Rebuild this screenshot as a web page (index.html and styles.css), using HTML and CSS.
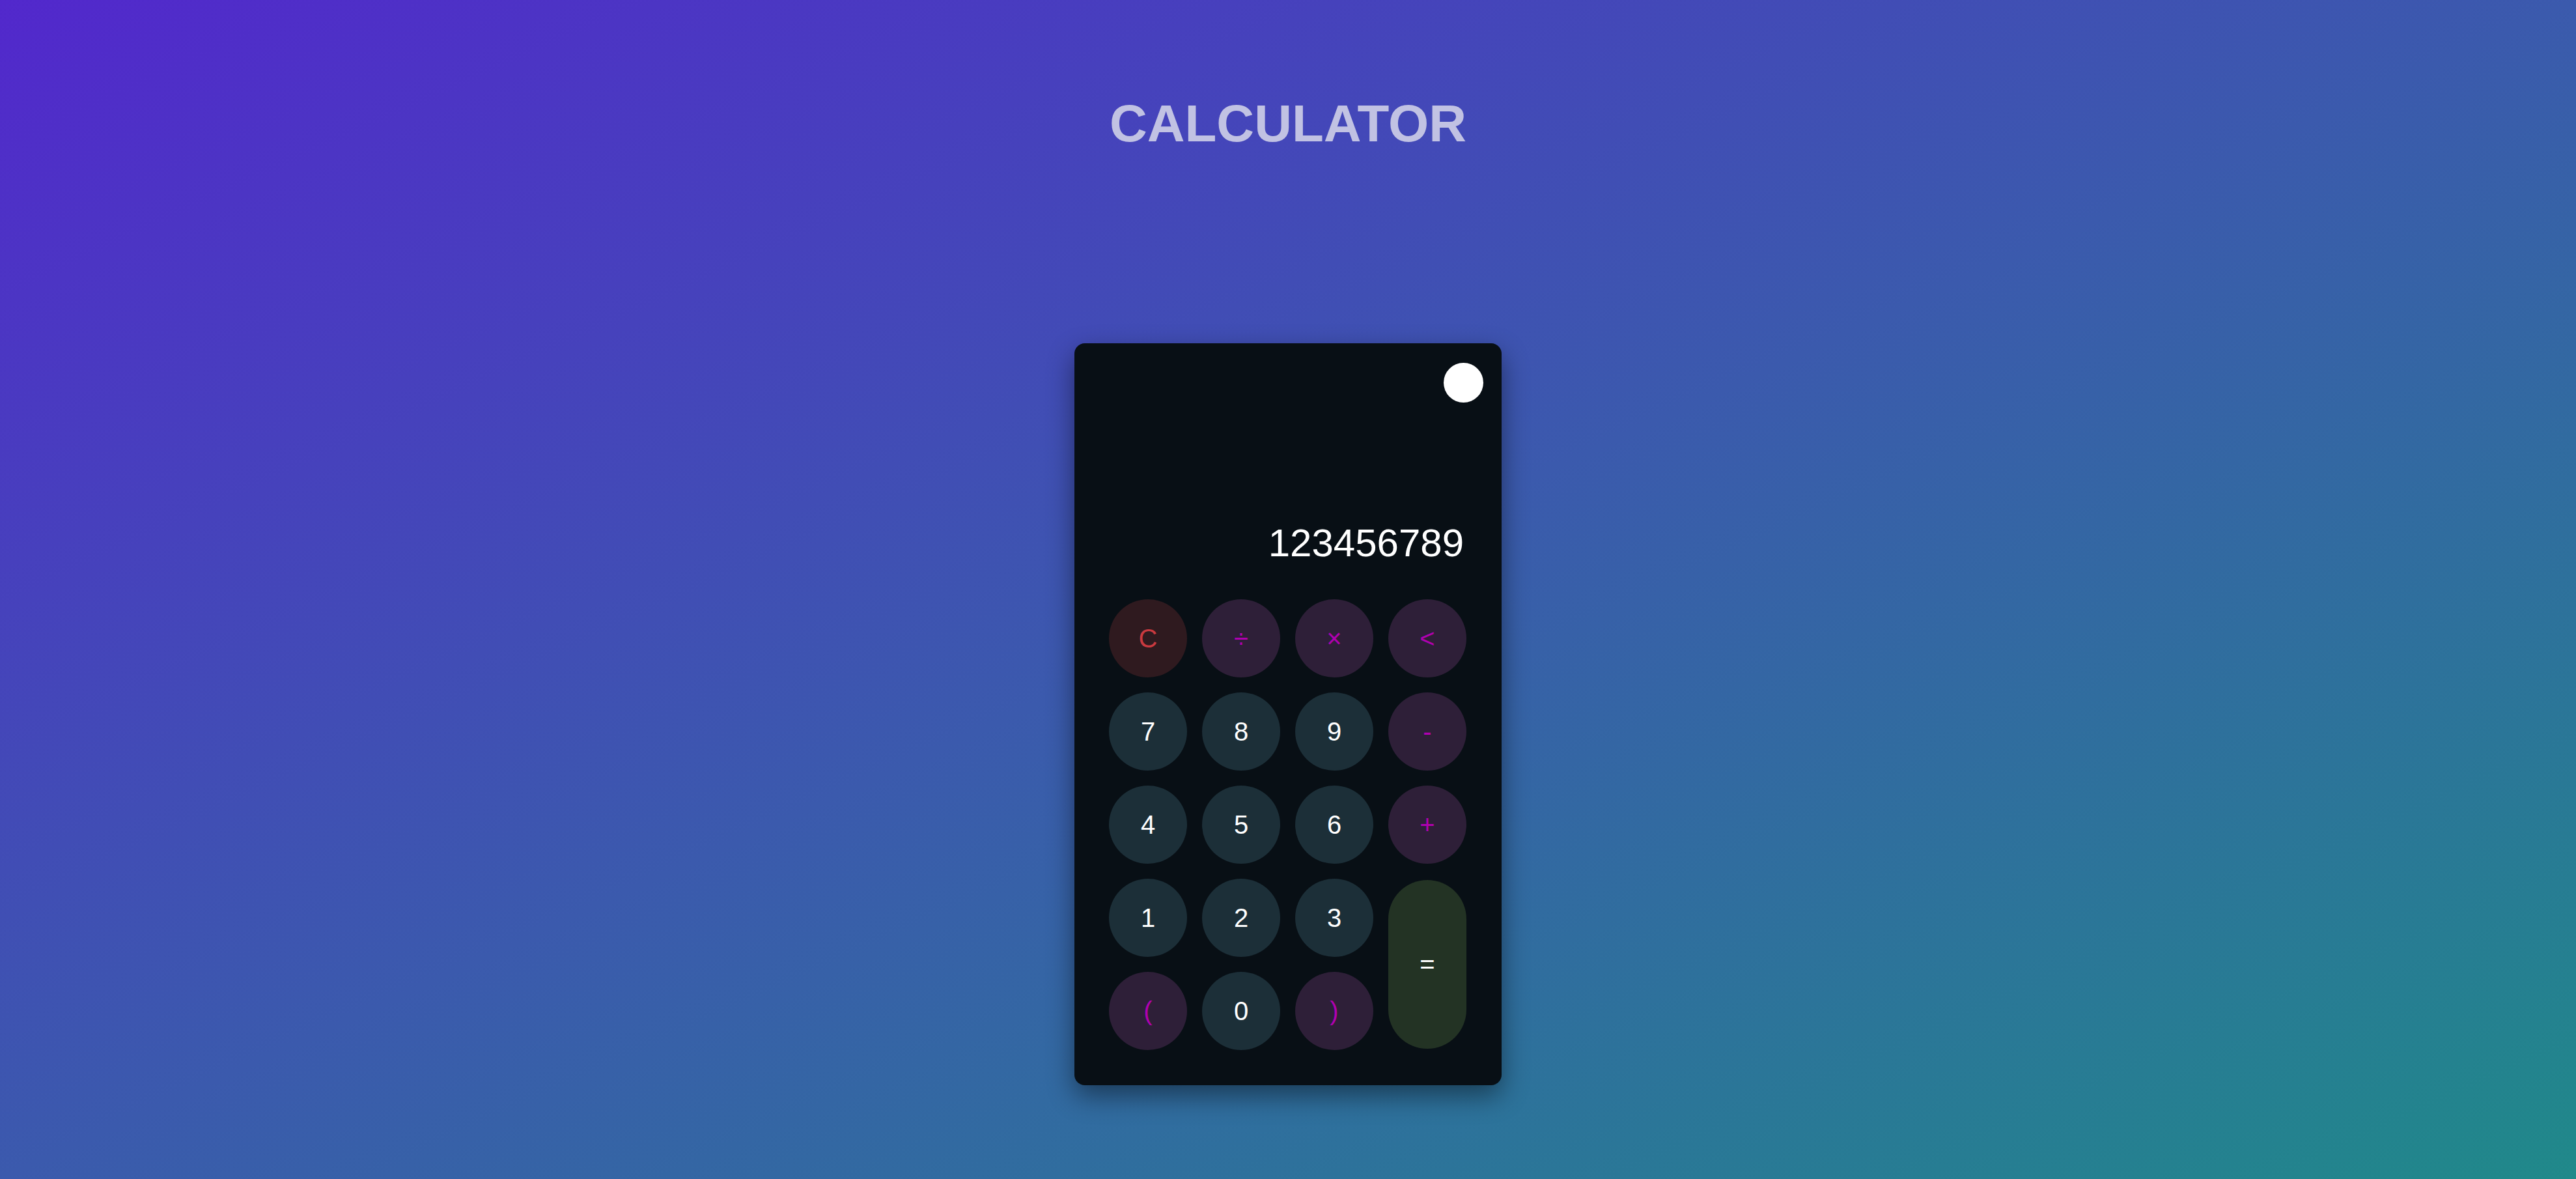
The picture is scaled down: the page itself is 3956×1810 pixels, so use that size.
FILE: index.html
```html
<!DOCTYPE html>
<html lang="en">
<head>
<meta charset="utf-8">
<title>Calculator</title>
<link rel="stylesheet" href="styles.css">
</head>
<body>
  <h1 class="title">CALCULATOR</h1>
  <div class="calc">
    <button class="theme-toggle" aria-label="Toggle theme"></button>
    <div class="display"><span class="display-text">123456789</span></div>
    <div class="keypad">
      <button class="key key-clear">C</button>
      <button class="key key-op">÷</button>
      <button class="key key-op">×</button>
      <button class="key key-op">&lt;</button>
      <button class="key key-num">7</button>
      <button class="key key-num">8</button>
      <button class="key key-num">9</button>
      <button class="key key-op">-</button>
      <button class="key key-num">4</button>
      <button class="key key-num">5</button>
      <button class="key key-num">6</button>
      <button class="key key-op">+</button>
      <button class="key key-num">1</button>
      <button class="key key-num">2</button>
      <button class="key key-num">3</button>
      <button class="key key-equals">=</button>
      <button class="key key-op">(</button>
      <button class="key key-num">0</button>
      <button class="key key-op">)</button>
    </div>
  </div>
</body>
</html>
```
FILE: styles.css
```css
* {
  box-sizing: border-box;
}

html, body {
  margin: 0;
  padding: 0;
}

body {
  min-height: 100vh;
  background: linear-gradient(to bottom right, #5228cc 0%, #3b5aad 50%, #20898a 100%);
  font-family: "Liberation Sans", Arial, sans-serif;
  display: flex;
  flex-direction: column;
  align-items: center;
}

.title {
  margin: 0;
  padding-top: 144px;
  font-size: 80px;
  line-height: 92px;
  font-weight: 700;
  color: #c1c2e3;
  text-align: center;
}

.calc {
  position: relative;
  margin-top: 291px;
  width: 656px;
  padding: 53px 54px 54px 53px;
  background: #080f15;
  border-radius: 16px;
  box-shadow: 0 16px 40px rgba(0, 0, 0, 0.45);
}

.theme-toggle {
  position: absolute;
  top: 30px;
  right: 28px;
  width: 61px;
  height: 61px;
  border: none;
  border-radius: 50%;
  background: #ffffff;
  padding: 0;
}

.display {
  height: 288px;
  display: flex;
  align-items: flex-end;
  justify-content: flex-end;
  padding-right: 4px;
  margin-bottom: 52px;
}

.display-text {
  font-size: 60px;
  line-height: 69px;
  color: #ffffff;
}

.keypad {
  display: grid;
  grid-template-columns: repeat(4, 120px);
  grid-auto-rows: 120px;
  column-gap: 23px;
  row-gap: 23px;
}

.key {
  width: 120px;
  height: 120px;
  border: none;
  border-radius: 50%;
  padding: 0;
  font-family: "Liberation Sans", Arial, sans-serif;
  font-size: 40px;
  display: flex;
  align-items: center;
  justify-content: center;
}

.key-num {
  background: #1c2f38;
  color: #ffffff;
}

.key-op {
  background: #2e1f38;
  color: #b000b0;
}

.key-clear {
  background: #2f1a1f;
  color: #c93a40;
}

.key-equals {
  grid-column: 4;
  grid-row: 4 / span 2;
  height: auto;
  margin: 2px 0;
  border-radius: 60px;
  background: #233324;
  color: #ffffff;
}
```
